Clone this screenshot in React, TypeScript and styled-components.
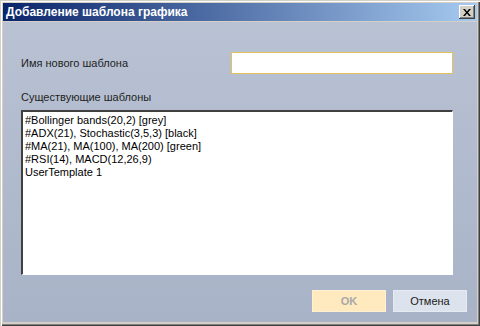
import React from "react";
import styled, { createGlobalStyle } from "styled-components";

const Global = createGlobalStyle`
  html, body { margin: 0; padding: 0; background: #ffffff; }
  body { font-family: Tahoma, "Liberation Sans", Arial, sans-serif; }
  #root { width: 480px; height: 326px; }
`;

const Window = styled.div`
  width: 480px;
  height: 326px;
  box-sizing: border-box;
  background: #d4d0c8;
  padding: 3px 3px 4px 3px;
  display: flex;
  flex-direction: column;
  gap: 1px;
  box-shadow: inset 1px 1px 0 #d4d0c8, inset 2px 2px 0 #ffffff,
    inset -1px -1px 0 #404040, inset -2px -2px 0 #808080;
`;

const TitleBar = styled.div`
  height: 18px;
  flex: none;
  background: linear-gradient(to right, #0a246a 0%, #a6caf0 100%);
  display: flex;
  align-items: center;
  justify-content: space-between;
  padding: 0 2px 0 3px;
`;

const Title = styled.span`
  color: #ffffff;
  font-family: Tahoma, "Liberation Sans", Arial, sans-serif;
  font-weight: bold;
  font-size: 12px;
`;

const CloseButton = styled.button`
  width: 16px;
  height: 14px;
  padding: 0;
  border: none;
  background: #d4d0c8;
  display: flex;
  align-items: center;
  justify-content: center;
  box-shadow: inset -1px -1px 0 #404040, inset 1px 1px 0 #ffffff,
    inset -2px -2px 0 #808080, inset 2px 2px 0 #d4d0c8;
`;

const Body = styled.div`
  flex: 1;
  background: linear-gradient(to bottom, #b9c2d3 0%, #a8b3c7 100%);
  padding: 30px 10px 0 18px;
  display: flex;
  flex-direction: column;
`;

const NameRow = styled.div`
  display: grid;
  grid-template-columns: 210px 222px;
  align-items: center;
  height: 22px;
`;

const Label = styled.label`
  font-size: 11px;
  color: #1e1e1e;
  line-height: 14px;
`;

const NameInput = styled.input`
  box-sizing: border-box;
  width: 222px;
  height: 22px;
  border: 1px solid #e6c25c;
  background: #ffffff;
  outline: none;
  padding: 0 3px;
  font: inherit;
  font-size: 11px;
`;

const ListLabel = styled(Label)`
  margin-top: 16px;
`;

const ListBox = styled.div`
  box-sizing: border-box;
  margin-top: 6px;
  width: 432px;
  height: 165px;
  background: #ffffff;
  border-style: solid;
  border-width: 2px 1px 1px 2px;
  border-color: #404040 #ffffff #ffffff #404040;
  padding: 2px 2px;
  overflow: hidden;
`;

const ListLine = styled.div`
  font-size: 11px;
  line-height: 13px;
  color: #000000;
  white-space: nowrap;
`;

const ButtonRow = styled.div`
  margin-top: 15px;
  display: flex;
  justify-content: flex-end;
  gap: 7px;
`;

const DialogButton = styled.button<{ $primary?: boolean }>`
  width: 74px;
  height: 22px;
  box-sizing: border-box;
  border: 1px solid ${(p) => (p.$primary ? "#fff0d2" : "#e6eaf1")};
  background: ${(p) => (p.$primary ? "#ffe9bf" : "#dde3ec")};
  color: ${(p) => (p.$primary ? "#a8a8a8" : "#1a1a1a")};
  font-family: inherit;
  font-size: 11px;
  font-weight: ${(p) => (p.$primary ? "bold" : "normal")};
  padding: 0;
`;

const templates = [
  "#Bollinger bands(20,2) [grey]",
  "#ADX(21), Stochastic(3,5,3) [black]",
  "#MA(21), MA(100), MA(200) [green]",
  "#RSI(14), MACD(12,26,9)",
  "UserTemplate 1",
];

export default function App() {
  return (
    <>
      <Global />
      <Window>
        <TitleBar>
          <Title>Добавление шаблона графика</Title>
          <CloseButton aria-label="close">
            <svg width="8" height="7" viewBox="0 0 8 7">
              <path d="M0 0h2l2 2.5L6 0h2L5 3.5 8 7H6L4 4.5 2 7H0l3-3.5z" fill="#000" />
            </svg>
          </CloseButton>
        </TitleBar>
        <Body>
          <NameRow>
            <Label>Имя нового шаблона</Label>
            <NameInput />
          </NameRow>
          <ListLabel>Существующие шаблоны</ListLabel>
          <ListBox>
            {templates.map((t) => (
              <ListLine key={t}>{t}</ListLine>
            ))}
          </ListBox>
          <ButtonRow>
            <DialogButton $primary>OK</DialogButton>
            <DialogButton>Отмена</DialogButton>
          </ButtonRow>
        </Body>
      </Window>
    </>
  );
}
